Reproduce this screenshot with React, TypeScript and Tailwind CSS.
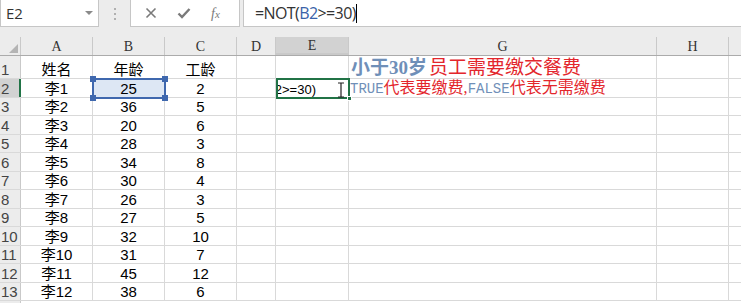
const cols = [
  { k: "A", w: "w-[72px]" },
  { k: "B", w: "w-[72px]" },
  { k: "C", w: "w-[72px]" },
  { k: "D", w: "w-[39px]" },
  { k: "E", w: "w-[73px]" },
  { k: "G", w: "w-[308px]" },
  { k: "H", w: "w-[72px]" },
  { k: "", w: "w-[40px]" },
];

const rows: [string, string, string][] = [
  ["李1", "25", "2"],
  ["李2", "36", "5"],
  ["李3", "20", "6"],
  ["李4", "28", "3"],
  ["李5", "34", "8"],
  ["李6", "30", "4"],
  ["李7", "26", "3"],
  ["李8", "27", "5"],
  ["李9", "32", "10"],
  ["李10", "31", "7"],
  ["李11", "45", "12"],
  ["李12", "38", "6"],
];

const cellFont = { fontFamily: '"Liberation Sans", "Noto Sans CJK SC", sans-serif' };
const serif = { fontFamily: '"Liberation Serif", "Noto Sans CJK SC", serif' };
const mono = { fontFamily: '"Liberation Mono", monospace' };

const Cell = ({ w, children, bg = "" }: { w: string; children?: React.ReactNode; bg?: string }) => (
  <div className={`${w} ${bg} shrink-0 border-r border-[#d9d9d9] flex items-end justify-center pb-[1px] text-[15px] leading-none text-black overflow-visible whitespace-nowrap`}>
    {children}
  </div>
);

const RowHead = ({ n, sel = false }: { n: number; sel?: boolean }) => (
  <div
    className={`w-[21px] shrink-0 flex items-end text-[15px] leading-none pb-[1px] text-[#444] ${sel ? "bg-[#d2d2d2] border-r-2 border-[#217346]" : "bg-[#ececec] border-r border-[#c9c9c9]"}`}
    style={cellFont}
  >
    <span className="pl-[1px]">{n}</span>
  </div>
);

export default function App() {
  return (
    <div className="w-[741px] h-[303px] overflow-hidden bg-white relative select-none" style={cellFont}>
      {/* formula bar */}
      <div className="h-[37px] bg-[#ececec] flex items-start">
        <div className="w-[99px] h-[27px] bg-white border border-t-0 border-[#c6c6c6] flex items-center justify-between pl-[5px] pr-[5px]">
          <span className="text-[15px] text-[#333]" style={{ fontFamily: '"Open Sans", sans-serif' }}>E2</span>
          <span className="w-0 h-0 border-l-[4px] border-r-[4px] border-t-[4px] border-l-transparent border-r-transparent border-t-[#8a8a8a]" />
        </div>
        <div className="w-[31px] h-[27px] flex items-center justify-center">
          <div className="flex flex-col gap-[3px]">
            <span className="w-[2px] h-[2px] bg-[#b0b0b0]" />
            <span className="w-[2px] h-[2px] bg-[#b0b0b0]" />
            <span className="w-[2px] h-[2px] bg-[#b0b0b0]" />
          </div>
        </div>
        <div className="w-[110px] h-[27px] bg-white border border-t-0 border-[#c6c6c6] flex items-center">
          <svg width="12" height="12" viewBox="0 0 12 12" className="ml-[14px]">
            <path d="M1.5 1.5 L10.5 10.5 M10.5 1.5 L1.5 10.5" stroke="#7a7a7a" strokeWidth="1.6" />
          </svg>
          <svg width="14" height="12" viewBox="0 0 14 12" className="ml-[20px]">
            <path d="M1.5 6.5 L5 10 L12.5 2" stroke="#7a7a7a" strokeWidth="2.4" fill="none" />
          </svg>
          <span className="ml-[20px] text-[14px] italic text-[#7a7a7a]" style={serif}>
            f<span className="text-[11px]">x</span>
          </span>
        </div>
        <div className="ml-[3px] flex-1 h-[27px] bg-white border border-t-0 border-r-0 border-[#c6c6c6] flex items-center pl-[11px]">
          <span className="text-[16px] tracking-[-0.6px] text-[#333]" style={{ fontFamily: '"Open Sans", sans-serif' }}>
            =NOT(<span className="text-[#3a62a8]">B2</span>&gt;=30)
          </span>
          <span className="w-[1px] h-[19px] bg-black" />
        </div>
      </div>

      {/* column headers */}
      <div className="flex h-[19px] bg-[#ececec] border-b border-[#ababab]" style={serif}>
        <div className="w-[21px] shrink-0 border-r border-[#c9c9c9] relative">
          <span className="absolute right-[2px] bottom-[2px] w-0 h-0 border-l-[9px] border-b-[9px] border-l-transparent border-b-[#b4b4b4]" />
        </div>
        {cols.map((c) => (
          <div
            key={c.k + c.w}
            className={`${c.w} shrink-0 flex items-center justify-center text-[14px] text-[#333] ${c.k === "E" ? "bg-[#d2d2d2] border-b-2 border-[#217346]" : ""} border-r border-[#c9c9c9]`}
          >
            {c.k}
          </div>
        ))}
      </div>

      {/* row 1 */}
      <div className="flex h-[23px] border-b border-[#d9d9d9]">
        <RowHead n={1} />
        <Cell w="w-[72px]">姓名</Cell>
        <Cell w="w-[72px]">年龄</Cell>
        <Cell w="w-[72px]">工龄</Cell>
        <Cell w="w-[39px]" />
        <Cell w="w-[73px]" />
        <div className="w-[308px] shrink-0 border-r border-[#d9d9d9] flex items-end pl-[2px] pb-[1px] text-[19px] leading-none whitespace-nowrap" style={serif}>
          <span className="font-bold text-[#6f8fb8]">小于30岁</span>
          <span className="text-[#e3262c] ml-[2px]">员工需要缴交餐费</span>
        </div>
        <Cell w="w-[72px]" />
        <Cell w="w-[40px]" />
      </div>

      {/* data rows */}
      {rows.map((r, i) => (
        <div key={i} className="flex h-[18.5px] border-b border-[#d9d9d9]">
          <RowHead n={i + 2} sel={i === 0} />
          <Cell w="w-[72px]">{r[0]}</Cell>
          <Cell w="w-[72px]" bg={i === 0 ? "bg-[#dde7f4]" : ""}>{r[1]}</Cell>
          <Cell w="w-[72px]">{r[2]}</Cell>
          <Cell w="w-[39px]" />
          <Cell w="w-[73px]" />
          <div className="w-[308px] shrink-0 border-r border-[#d9d9d9] flex items-end pl-[1px] pb-[1px] text-[16px] leading-none whitespace-nowrap">
            {i === 0 && (
              <>
                <span className="text-[#6f8fb8] text-[14px]" style={mono}>TRUE</span>
                <span className="text-[#e3262c]" style={serif}>代表要缴费,</span>
                <span className="text-[#6f8fb8] text-[14px]" style={mono}>FALSE</span>
                <span className="text-[#e3262c]" style={serif}>代表无需缴费</span>
              </>
            )}
          </div>
          <Cell w="w-[72px]" />
          <Cell w="w-[40px]" />
        </div>
      ))}
      <div className="flex h-[10px]">
        <div className="w-[21px] bg-[#ececec] border-r border-[#c9c9c9]" />
      </div>

      {/* B2 reference box */}
      <div className="absolute left-[92px] top-[78px] w-[74px] h-[21px] border-2 border-[#3f68ae]">
        <span className="absolute -left-[4px] -top-[4px] w-[6px] h-[6px] bg-[#3f68ae]" />
        <span className="absolute -right-[4px] -top-[4px] w-[6px] h-[6px] bg-[#3f68ae]" />
        <span className="absolute -left-[4px] -bottom-[4px] w-[6px] h-[6px] bg-[#3f68ae]" />
        <span className="absolute -right-[4px] -bottom-[4px] w-[6px] h-[6px] bg-[#3f68ae]" />
      </div>

      {/* E2 active editing cell */}
      <div className="absolute left-[276px] top-[78px] w-[74px] h-[21px] border-2 border-[#217346] bg-white overflow-hidden flex items-end justify-end pr-[32px] pb-[1px]">
        <span className="text-[13px] leading-none whitespace-nowrap">=NOT(B2&gt;=30)</span>
      </div>
      <span className="absolute left-[347px] top-[96px] w-[5px] h-[5px] bg-[#217346] border border-white" />
      {/* I-beam cursor */}
      <svg width="8" height="16" viewBox="0 0 8 16" className="absolute left-[337px] top-[82px]">
        <path d="M1 1 H7 M1 15 H7 M4 1 V15" stroke="#222" strokeWidth="1.2" fill="none" />
      </svg>
    </div>
  );
}
